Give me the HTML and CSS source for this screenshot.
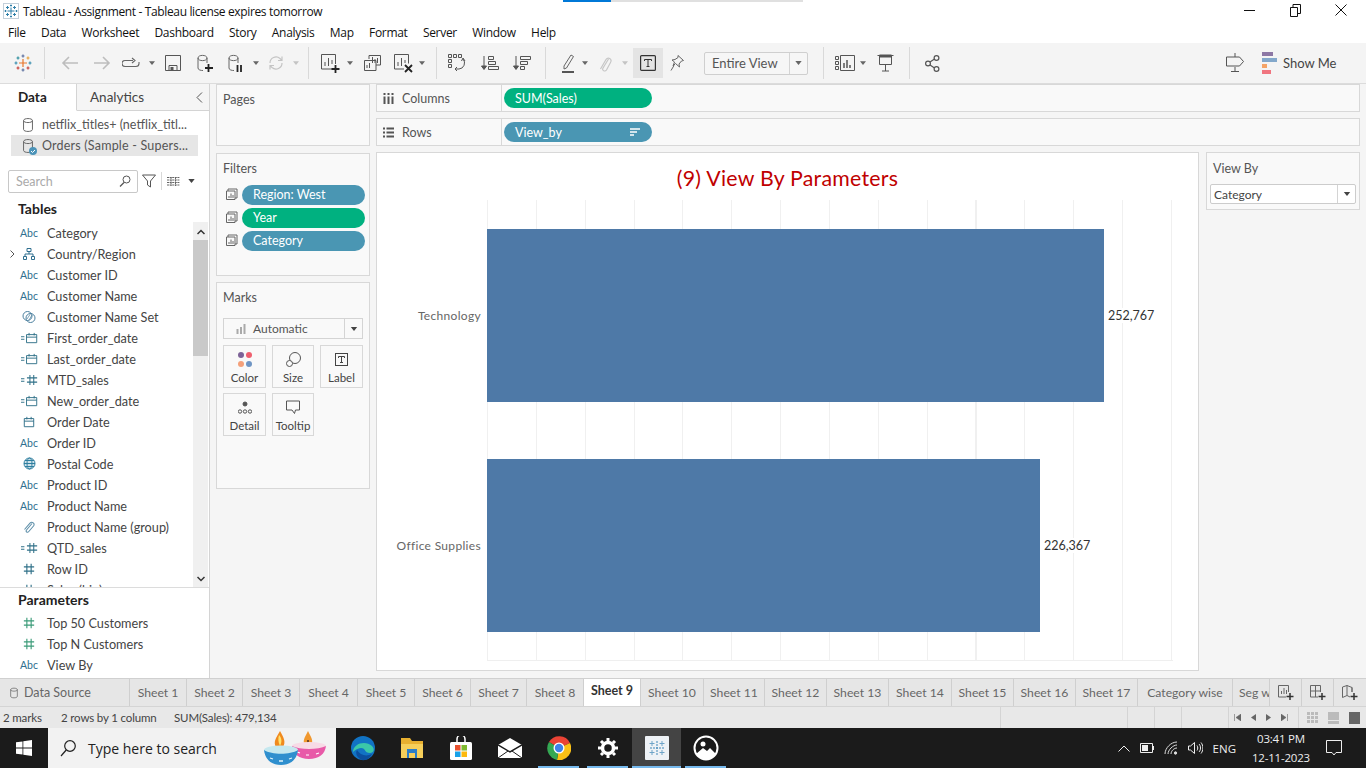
FILE: index.html
```html
<!DOCTYPE html>
<html lang="en">
<head>
<meta charset="utf-8">
<title>Tableau - Assignment</title>
<link rel="stylesheet" href="styles.css">
</head>
<body>
<svg class="defs" width="0" height="0">
  <defs>
    <symbol id="dd" viewBox="0 0 8 5"><path d="M0 0h8L4 5z"/></symbol>
    <symbol id="hash" viewBox="0 0 14 14"><path d="M4.5 1v12M9.500 1v12M1 4.500h12M1 9.500h12" fill="none" stroke="currentColor" stroke-width="1.300"/></symbol>
    <symbol id="eqhash" viewBox="0 0 20 14"><path d="M0 5.500h4M0 8.500h4M10.500 1v12M15 1v12M7 4.500h12M7 9.500h12" fill="none" stroke="currentColor" stroke-width="1.200"/></symbol>
    <symbol id="cal" viewBox="0 0 14 14"><path d="M1.500 3h11v9.500h-11zM1.500 6h11M4.500 1v3M9.500 1v3" fill="none" stroke="currentColor" stroke-width="1.100"/></symbol>
    <symbol id="eqcal" viewBox="0 0 20 14"><path d="M0 5.500h4M0 8.500h4M6.500 3h12v9.500h-12zM6.500 6h12M9.500 1v3M15.500 1v3" fill="none" stroke="currentColor" stroke-width="1.100"/></symbol>
    <symbol id="db" viewBox="0 0 14 18"><path d="M2 4v10c0 3 10 3 10 0V4M2 4c0-3 10-3 10 0s-10 3-10 0z" fill="none" stroke="currentColor" stroke-width="1.100"/></symbol>
    <symbol id="filt" viewBox="0 0 13 13"><path d="M3 3V1h9v9h-2M1.500 3h8.500v8.500H1.500zM4 10V8M6 10V5.500M8 10V7" fill="none" stroke="currentColor"/></symbol>
    <symbol id="flake" viewBox="0 0 18 18"><g fill="none" stroke-width="1.200"><path d="M9 5v8M5 9h8" stroke="#e8762c"/><path d="M9 .5v3M7.500 2h3M9 14.500v3M7.500 16h3" stroke="#5b6f9e"/><path d="M2 7.500v3M.5 9h3M16 7.500v3M14.500 9h3" stroke="#3b8fb0"/><path d="M4 2.500v3M2.500 4h3" stroke="#2f8f9e"/><path d="M14 2.500v3M12.500 4h3" stroke="#e8a23c"/><path d="M4 12.500v3M2.500 14h3M14 12.500v3M12.500 14h3" stroke="#c8423b"/></g></symbol>
  </defs>
</svg>
<div class="loadbar"><span class="load-a"></span><span class="load-b"></span></div>

<header class="titlebar">
  <svg class="app-ico" viewBox="0 0 16 16" width="16" height="16"><rect x=".5" y=".5" width="15" height="15" fill="#fff" stroke="#c4d0da"/><g fill="none" stroke="#2f7fa8"><path d="M8 4.500v7M4.500 8h7M8 1.500v2M7 2.500h2M8 12.500v2M7 13.500h2M2.500 7v2M1.500 8h2M13.500 7v2M12.500 8h2M4.500 3v3M3 4.500h3M11.500 3v3M10 4.500h3M4.500 10v3M3 11.500h3M11.500 10v3M10 11.500h3"/></g></svg>
  <span class="title-text">Tableau - Assignment - Tableau license expires tomorrow</span>
  <div class="win-btns">
    <svg width="11" height="10" viewBox="0 0 11 10"><path d="M0 5.500h11" stroke="#111"/></svg>
    <svg width="11" height="13" viewBox="0 0 11 13"><path d="M.5 3.500h7v9h-7zM3 3.500V.5h7.500v9H7.500" fill="none" stroke="#111"/></svg>
    <svg width="12" height="12" viewBox="0 0 12 12"><path d="M.5.500l11 11M11.500.5l-11 11" stroke="#111"/></svg>
  </div>
</header>

<nav class="menubar">
  <span>File</span><span>Data</span><span>Worksheet</span><span>Dashboard</span><span>Story</span><span>Analysis</span><span>Map</span><span>Format</span><span>Server</span><span>Window</span><span>Help</span>
</nav>

<div class="toolbar">
  <i class="tb w30"><svg width="18" height="18"><use href="#flake"/></svg></i>
  <i class="sp w6"></i><i class="sep"></i><i class="sp w9"></i>
  <i class="tb w32"><svg width="18" height="16" viewBox="0 0 18 16"><path d="M17 8H2M8 2L2 8l6 6" fill="none" stroke="#bdbdbd" stroke-width="1.600"/></svg></i>
  <i class="tb w32"><svg width="18" height="16" viewBox="0 0 18 16"><path d="M1 8h15M10 2l6 6-6 6" fill="none" stroke="#bdbdbd" stroke-width="1.600"/></svg></i>
  <i class="tb w26"><svg width="18" height="12" viewBox="0 0 18 12"><path d="M11 3.500H3a3 3 0 0 0 0 6h11a3 3 0 0 0 3-3V5M10 1l3 2.500L10 6" fill="none" stroke="#666" stroke-width="1.100"/></svg></i>
  <i class="sp w3"></i><i class="tb w10"><svg class="dd" width="6" height="4"><use href="#dd"/></svg></i>
  <i class="tb w32"><svg width="16" height="16" viewBox="0 0 16 16"><path d="M.5.500h15v15H.5zM4 15.500v-5h8v5" fill="none" stroke="#555"/><rect x="5.500" y="12" width="3" height="3" fill="#555"/></svg></i>
  <i class="tb w32"><svg width="16" height="19" viewBox="0 0 16 19"><path d="M1 4v10c0 2 3 2.500 5 2.500M1 4c0-3.500 9-3.500 9 0s-9 3.500-9 0zM10 4v5" fill="none" stroke="#666"/><path d="M11.500 10v8M8 14h8" stroke="#222" stroke-width="1.800"/></svg></i>
  <i class="tb w30"><svg width="16" height="19" viewBox="0 0 16 19"><path d="M1 4v10c0 2 3 2.500 5 2.500M1 4c0-3.500 9-3.500 9 0s-9 3.500-9 0zM10 4v5" fill="none" stroke="#666"/><path d="M9.500 11v7M13 11v7" stroke="#222" stroke-width="1.800"/></svg></i>
  <i class="tb w10"><svg class="dd" width="6" height="4"><use href="#dd"/></svg></i>
  <i class="tb w30"><svg width="16" height="16" viewBox="0 0 16 16"><path d="M2 8a6 6 0 0 1 10-4.500l2 2M14 8a6 6 0 0 1-10 4.500l-2-2M14 1.500v4h-4M2 14.500v-4h4" fill="none" stroke="#c4c4c4" stroke-width="1.200"/></svg></i>
  <i class="tb w10"><svg class="dd off" width="6" height="4"><use href="#dd"/></svg></i>
  <i class="sp w7"></i><i class="sep"></i><i class="sp w7"></i>
  <i class="tb w28"><svg width="19" height="19" viewBox="0 0 19 19"><path d="M11 15H.5V.5h14V10M4 12V8M7.500 12V4M11 10V6" fill="none" stroke="#555"/><path d="M14.500 11v8M10.500 15h8" stroke="#222" stroke-width="1.800"/></svg></i>
  <i class="sp w1"></i><i class="tb w10"><svg class="dd" width="6" height="4"><use href="#dd"/></svg></i>
  <i class="tb w34"><svg width="17" height="16" viewBox="0 0 17 16"><path d="M5 4V.5h11.500V10H12M.5 5.500H12v10H.5zM8.500 8V2M11 8V4M13.500 8V3M3 13v-3M5.500 13v-5" fill="none" stroke="#555"/></svg></i>
  <i class="tb w28"><svg width="19" height="19" viewBox="0 0 19 19"><path d="M10 15H.5V.5h14v9M4 12V8M7.500 12V4M11 9V6" fill="none" stroke="#555"/><path d="M11 11l7 7M18 11l-7 7" stroke="#222" stroke-width="1.800"/></svg></i>
  <i class="tb w10"><svg class="dd" width="6" height="4"><use href="#dd"/></svg></i>
  <i class="sp w9"></i><i class="sep"></i>
  <i class="tb w40"><svg width="18" height="18" viewBox="0 0 18 18" fill="none" stroke="#555"><path d="M.5.500h3v3h-3zM5.500.500h3v3h-3zM10.500.500h3v3h-3zM.5 5.500h3v3h-3zM.5 10.500h3v3h-3zM15 5a6 6 0 0 1-4 10H7M13.500 7L15 4l2 3M9 13l-2 2 2 2"/></svg></i>
  <i class="tb w26"><svg width="18" height="16" viewBox="0 0 18 16" fill="none" stroke="#555"><path d="M8 1.500h5v3H8zM8 6.500h7v3H8zM8 11.500h10v3H8z" transform="translate(-.5 0)"/><path d="M3 1v13" /><path d="M.5 11L3 14.500 5.500 11z" fill="#555"/></svg></i>
  <i class="tb w38"><svg width="18" height="16" viewBox="0 0 18 16" fill="none" stroke="#555"><path d="M7.500 1.500h10v3h-10zM7.500 6.500h7v3h-7zM7.500 11.500h4v3h-4z"/><path d="M3 1v13"/><path d="M.5 11L3 14.500 5.500 11z" fill="#555"/></svg></i>
  <i class="sp w4"></i><i class="sep"></i><i class="sp w10"></i>
  <i class="tb w24"><svg width="13" height="19" viewBox="0 0 13 19"><path d="M2 12L9 1l2.500 1.500L4.500 14 2 15z" fill="none" stroke="#666"/><rect y="17" width="12" height="2" fill="#555"/></svg></i>
  <i class="tb w10"><svg class="dd" width="6" height="4"><use href="#dd"/></svg></i>
  <i class="tb w30"><svg width="13" height="19" viewBox="0 0 13 19"><path d="M10 5L4.500 14c-1.500 2.500 2 4 3.500 2l4-7.500c2-3.500-2.500-6-4.500-3L2 15" fill="none" stroke="#c6c6c6" stroke-width="1.200" transform="translate(-.5 0)"/></svg></i>
  <i class="tb w10"><svg class="dd off" width="6" height="4"><use href="#dd"/></svg></i>
  <i class="sp w3"></i>
  <i class="tb w30 tb-on"><svg width="16" height="16" viewBox="0 0 16 16"><rect x=".6" y=".6" width="14.800" height="14.800" rx="1" fill="none" stroke="#333" stroke-width="1.200"/><path d="M4.500 6V4.500h7V6M8 4.500v7M6.500 11.500h3" fill="none" stroke="#333"/></svg></i>
  <i class="tb w28"><svg width="14" height="16" viewBox="0 0 14 16"><path d="M8 .5l5.500 5-2 .5-2.500 3 .5 3L5.500 8.500 3 11l1.500-4L2 5l3-.5 3-2z" fill="none" stroke="#666"/><path d="M4 10.500L1 15.500" stroke="#666"/></svg></i>
  <i class="sp w13"></i>
  <span class="fit"><span class="fit-text">Entire View</span><span class="fit-dd"><svg class="dd" width="7" height="4"><use href="#dd"/></svg></span></span>
  <i class="sp w15"></i><i class="sep"></i><i class="sp w6"></i>
  <i class="tb w30"><svg width="20" height="16" viewBox="0 0 20 16" fill="none" stroke="#555"><path d="M.5 1.500h3v3h-3zM.5 6.500h3v3h-3zM.5 11.500h3v3h-3zM5.500.5h14v15h-14z"/><path d="M9 13V8M12 13V5M15 13v-3" stroke-width="1.500"/></svg></i>
  <i class="tb w6"><svg class="dd" width="6" height="4"><use href="#dd"/></svg></i>
  <i class="tb w38"><svg width="17" height="18" viewBox="0 0 17 18" fill="none" stroke="#555"><path d="M.5 1.500h16M2.500 1.500v9h12v-9M8.500 10.500V17M5 17h7"/><path d="M2.500 1h12v2h-12z" fill="#555"/></svg></i>
  <i class="sp w5"></i><i class="sep"></i>
  <i class="tb w44"><svg width="15" height="17" viewBox="0 0 15 17" fill="none" stroke="#555" stroke-width="1.200"><circle cx="3" cy="8.500" r="2.400"/><circle cx="11.500" cy="3" r="2.400"/><circle cx="11.500" cy="14" r="2.400"/><path d="M5 7l4.500-3M5 10l4.500 3"/></svg></i>
  <i class="grow"></i>
  <i class="tb w18"><svg width="18" height="20" viewBox="0 0 18 20" fill="none" stroke="#555"><path d="M9 0v5M9 15v5M5 19.500h8M.5 5h13l4 4.500-4 4.500H.5z" transform="translate(0 -1)"/></svg></i>
  <i class="sp w18"></i>
  <span class="showme">
    <svg width="16" height="23" viewBox="0 0 16 23"><rect width="11" height="4" fill="#8d78a5"/><rect y="6" width="15" height="4" fill="#83a8cb"/><rect y="12" width="5" height="4" fill="#f4a468"/><rect y="18" width="9" height="4" fill="#f0757f"/></svg>
    <span>Show Me</span>
  </span>
</div>

<main class="work">
  <aside class="left">
    <div class="side-tabs">
      <span class="side-tab on">Data</span>
      <span class="side-tab">Analytics</span>
      <svg class="collapse" width="7" height="11" viewBox="0 0 7 11"><path d="M6 .5l-5 5 5 5" fill="none" stroke="#555"/></svg>
    </div>
    <div class="sources">
      <div class="source"><svg width="14" height="16" class="c-grey"><use href="#db"/></svg><span>netflix_titles+ (netflix_titl...</span></div>
      <div class="source sel"><span class="src-ico"><svg width="14" height="16" class="c-grey"><use href="#db"/></svg><svg class="check" width="8" height="8" viewBox="0 0 8 8"><circle cx="4" cy="4" r="4" fill="#4b93b8"/><path d="M2 4l1.500 1.500L6 3" fill="none" stroke="#fff"/></svg></span><span class="sel-name">Orders (Sample - Supers...</span></div>
    </div>
    <div class="searchrow">
      <div class="search"><span>Search</span><svg width="12" height="12" viewBox="0 0 12 12"><circle cx="7.500" cy="4.500" r="3.500" fill="none" stroke="#555"/><path d="M5 7.500l-4 4" stroke="#555" stroke-width="1.300"/></svg></div>
      <svg width="14" height="14" viewBox="0 0 14 14"><path d="M.5 1h13L8.500 7v6l-3-2V7z" fill="none" stroke="#555"/></svg>
      <i class="vsep"></i>
      <svg width="13" height="9" viewBox="0 0 13 9"><path d="M0 .5h13M0 3h13M0 5.500h13M0 8h13M4 0v9M8.500 0v9" stroke="#666" stroke-dasharray="2 .6"/></svg>
      <svg class="dd dark" width="7" height="4"><use href="#dd"/></svg>
    </div>
    <h2 class="head">Tables</h2>
    <div class="fields">
      <div class="field-list">
        <div class="field"><span class="fi abc">Abc</span>Category</div>
        <div class="field"><svg class="expand" width="5" height="8" viewBox="0 0 5 8"><path d="M.5.500L4 4 .5 7.500" fill="none" stroke="#555"/></svg><span class="fi"><svg width="12" height="12" viewBox="0 0 12 12" fill="none" stroke="#2f6f8f"><path d="M4 .5h4v3H4zM.5 8.500h3v3h-3zM8.500 8.500h3v3h-3zM6 3.500V6M2 8.500V6h8v2.500"/></svg></span>Country/Region</div>
        <div class="field"><span class="fi abc">Abc</span>Customer ID</div>
        <div class="field"><span class="fi abc">Abc</span>Customer Name</div>
        <div class="field"><span class="fi"><svg width="14" height="14" viewBox="0 0 14 14" fill="none" stroke="#4a7f9e"><circle cx="5.500" cy="6" r="4.500"/><circle cx="8.500" cy="8" r="4.500"/><path d="M5 9l4-6M7 10l3-5" stroke-width=".7"/></svg></span>Customer Name Set</div>
        <div class="field"><span class="fi"><svg width="17" height="12" class="c-teal" viewBox="0 0 20 14"><use href="#eqcal"/></svg></span>First_order_date</div>
        <div class="field"><span class="fi"><svg width="17" height="12" class="c-teal" viewBox="0 0 20 14"><use href="#eqcal"/></svg></span>Last_order_date</div>
        <div class="field"><span class="fi"><svg width="17" height="12" class="c-teal" viewBox="0 0 20 14"><use href="#eqhash"/></svg></span>MTD_sales</div>
        <div class="field"><span class="fi"><svg width="17" height="12" class="c-teal" viewBox="0 0 20 14"><use href="#eqcal"/></svg></span>New_order_date</div>
        <div class="field"><span class="fi"><svg width="12" height="12" class="c-teal" viewBox="0 0 14 14"><use href="#cal"/></svg></span>Order Date</div>
        <div class="field"><span class="fi abc">Abc</span>Order ID</div>
        <div class="field"><span class="fi"><svg width="13" height="13" viewBox="0 0 13 13" fill="none" stroke="#2f7fa0"><circle cx="6.500" cy="6.500" r="5.500" fill="#cfe2ea"/><ellipse cx="6.500" cy="6.500" rx="2.500" ry="5.500"/><path d="M1 6.500h11M2 3.500h9M2 9.500h9"/></svg></span>Postal Code</div>
        <div class="field"><span class="fi abc">Abc</span>Product ID</div>
        <div class="field"><span class="fi abc">Abc</span>Product Name</div>
        <div class="field"><span class="fi"><svg width="12" height="14" viewBox="0 0 12 14"><path d="M9 3.500L3.500 10c-1.300 1.700 1 3 2.300 1.500L10.500 6c2-2.500-1.500-5-3.500-2.800L1.500 9.500" fill="none" stroke="#5f90aa" stroke-width="1.100"/></svg></span>Product Name (group)</div>
        <div class="field"><span class="fi"><svg width="17" height="12" class="c-teal" viewBox="0 0 20 14"><use href="#eqhash"/></svg></span>QTD_sales</div>
        <div class="field"><span class="fi"><svg width="12" height="12" class="c-teal" viewBox="0 0 14 14"><use href="#hash"/></svg></span>Row ID</div>
        <div class="field"><span class="fi"><svg width="12" height="12" class="c-teal" viewBox="0 0 14 14"><use href="#hash"/></svg></span>Sales (bin)</div>
      </div>
      <div class="scroll">
        <svg class="sc-arrow" width="8" height="6" viewBox="0 0 8 6"><path d="M.5 5L4 1.500 7.500 5" fill="none" stroke="#333" stroke-width="1.500"/></svg>
        <div class="thumb"></div>
        <svg class="sc-arrow end" width="8" height="6" viewBox="0 0 8 6"><path d="M.5 1L4 4.500 7.500 1" fill="none" stroke="#333" stroke-width="1.500"/></svg>
      </div>
    </div>
    <h2 class="head params">Parameters</h2>
    <div class="field"><span class="fi"><svg width="12" height="12" class="c-green" viewBox="0 0 14 14"><use href="#hash"/></svg></span>Top 50 Customers</div>
    <div class="field"><span class="fi"><svg width="12" height="12" class="c-green" viewBox="0 0 14 14"><use href="#hash"/></svg></span>Top N Customers</div>
    <div class="field"><span class="fi abc">Abc</span>View By</div>
  </aside>

  <section class="cards">
    <div class="card pages"><h3>Pages</h3></div>
    <div class="card filters">
      <h3>Filters</h3>
      <div class="filter"><svg width="13" height="13" class="c-grey"><use href="#filt"/></svg><span class="pill blue">Region: West</span></div>
      <div class="filter"><svg width="13" height="13" class="c-grey"><use href="#filt"/></svg><span class="pill green">Year</span></div>
      <div class="filter"><svg width="13" height="13" class="c-grey"><use href="#filt"/></svg><span class="pill blue">Category</span></div>
    </div>
    <div class="card marks">
      <h3>Marks</h3>
      <div class="marktype">
        <svg width="10" height="10" viewBox="0 0 10 10"><path d="M1.500 10V5M5 10V3M8.500 10V0" stroke="#aaa" stroke-width="2"/></svg>
        <span>Automatic</span>
        <span class="mt-dd"><svg class="dd dark" width="8" height="4"><use href="#dd"/></svg></span>
      </div>
      <div class="markgrid">
        <div class="mk"><svg width="14" height="15" viewBox="0 0 14 15"><circle cx="3" cy="3" r="3" fill="#7d6398"/><circle cx="11" cy="3" r="3" fill="#ef5f6e"/><circle cx="3" cy="12" r="3" fill="#f4a07a"/><circle cx="11" cy="12" r="3" fill="#6f95c4"/></svg><span>Color</span></div>
        <div class="mk"><svg width="15" height="15" viewBox="0 0 15 15" fill="none" stroke="#555"><circle cx="9" cy="6" r="5.500"/><circle cx="3.500" cy="11.500" r="3" fill="#fafafa"/></svg><span>Size</span></div>
        <div class="mk"><svg width="13" height="13" viewBox="0 0 13 13" fill="none" stroke="#444"><rect x=".5" y=".5" width="12" height="12"/><path d="M3.500 5V3.500h6V5M6.500 3.500v6M5 9.500h3"/></svg><span>Label</span></div>
        <div class="mk"><svg width="14" height="13" viewBox="0 0 14 13" fill="none" stroke="#555"><circle cx="7" cy="3" r="2" fill="#555"/><circle cx="2" cy="10.500" r="1.700"/><circle cx="7" cy="10.500" r="1.700"/><circle cx="12" cy="10.500" r="1.700"/></svg><span>Detail</span></div>
        <div class="mk"><svg width="14" height="14" viewBox="0 0 14 14"><path d="M.5.500h13v9h-4l-1 3.500-2.500-3.500H.5z" fill="none" stroke="#555"/></svg><span>Tooltip</span></div>
      </div>
    </div>
  </section>

  <section class="view">
    <div class="shelf"><span class="shelf-l"><svg width="11" height="11" viewBox="0 0 11 11"><path d="M1.500 0v2M5.500 0v2M9.500 0v2M1.500 3.500V11M5.500 3.500V11M9.500 3.500V11" stroke="#555" stroke-width="2"/></svg>Columns</span><span class="pill green shelf-pill">SUM(Sales)</span></div>
    <div class="shelf"><span class="shelf-l"><svg width="11" height="11" viewBox="0 0 11 11"><path d="M0 1.500h2M3.500 1.500H11M0 5.500h2M3.500 5.500H11M0 9.500h2M3.500 9.500H11" stroke="#555" stroke-width="2"/></svg>Rows</span><span class="pill blue shelf-pill sorted">View_by<svg width="10" height="8" viewBox="0 0 10 8"><path d="M0 1h10M0 4h7M0 7h4" stroke="#fff" stroke-width="1.500"/></svg></span></div>
    <div class="lower">
      <div class="chart">
        <h1 class="chart-title">(9) View By Parameters</h1>
        <div class="plot">
          <div class="bar-row"><span class="cat">Technology</span><div class="bar tech"></div><span class="val">252,767</span></div>
          <div class="bar-row"><span class="cat">Office Supplies</span><div class="bar office"></div><span class="val">226,367</span></div>
        </div>
      </div>
      <div class="card param">
        <h3>View By</h3>
        <div class="select"><span>Category</span><span class="sel-dd"><svg class="dd dark" width="8" height="4"><use href="#dd"/></svg></span></div>
      </div>
    </div>
  </section>
</main>

<div class="tabs">
  <span class="tab src"><svg width="10" height="12" class="c-grey" viewBox="0 0 14 18"><use href="#db"/></svg>Data Source</span>
  <span class="tab t57">Sheet 1</span><span class="tab t56">Sheet 2</span><span class="tab t57">Sheet 3</span><span class="tab t58">Sheet 4</span><span class="tab t57">Sheet 5</span><span class="tab t56">Sheet 6</span><span class="tab t56">Sheet 7</span><span class="tab t57">Sheet 8</span>
  <span class="tab t57 active">Sheet 9</span>
  <span class="tab t63">Sheet 10</span><span class="tab t61">Sheet 11</span><span class="tab t62">Sheet 12</span><span class="tab t62">Sheet 13</span><span class="tab t63">Sheet 14</span><span class="tab t62">Sheet 15</span><span class="tab t62">Sheet 16</span><span class="tab t62">Sheet 17</span>
  <span class="tab t95">Category wise</span><span class="tab t36">Seg wise</span>
  <span class="tab-add"><svg width="16" height="15" viewBox="0 0 16 15" fill="none" stroke="#666"><path d="M8 12H.5V.5h10V7M3.500 9V6M6 9V3M8.500 9V5"/><path d="M12 8v7M8.500 11.500h7" stroke="#333" stroke-width="1.500"/></svg></span>
  <span class="tab-add"><svg width="16" height="15" viewBox="0 0 16 15" fill="none" stroke="#666"><path d="M8 12H.5V.5h10V7M.5 6h10M5.500.5V12"/><path d="M12 8v7M8.500 11.500h7" stroke="#333" stroke-width="1.500"/></svg></span>
  <span class="tab-add"><svg width="16" height="15" viewBox="0 0 16 15" fill="none" stroke="#666"><path d="M8 12L5 10.500l-4.500 2V2L5 .5l5 2V7M5 .5v10M10 2.500V7"/><path d="M12 8v7M8.500 11.500h7" stroke="#333" stroke-width="1.500"/></svg></span>
</div>

<div class="status">
  <span class="st-a">2 marks</span><span class="st-b">2 rows by 1 column</span><span class="st-c">SUM(Sales): 479,134</span>
  <i class="grow"></i>
  <i class="st-cell c1"></i><i class="st-cell c2"></i><i class="st-cell c3"></i><i class="st-cell c4"></i>
  <span class="st-nav">
    <svg width="7" height="7" viewBox="0 0 7 7"><path d="M.5 0v7M7 0v7L2 3.500z" fill="#666" stroke="#666" stroke-width=".6"/></svg>
    <svg width="5" height="7" viewBox="0 0 5 7"><path d="M5 0v7L0 3.500z" fill="#666"/></svg>
    <svg width="5" height="7" viewBox="0 0 5 7"><path d="M0 0v7l5-3.500z" fill="#666"/></svg>
    <svg width="7" height="7" viewBox="0 0 7 7"><path d="M6.500 0v7M0 0v7l5-3.500z" fill="#666" stroke="#666" stroke-width=".6"/></svg>
  </span>
  <span class="st-view">
    <i class="vw small"></i><i class="vw mid"></i><i class="vw big"></i>
  </span>
</div>

<footer class="taskbar">
  <span class="start"><svg width="16" height="16" viewBox="0 0 16 16" fill="#fff"><path d="M0 2.300l6.500-.9v6.200H0zM7.300 1.300L16 0v7.600H7.300zM0 8.400h6.500v6.200L0 13.700zM7.300 8.400H16V16l-8.700-1.200z"/></svg></span>
  <div class="tasksearch">
    <svg width="16" height="17" viewBox="0 0 16 17" fill="none" stroke="#222" stroke-width="1.200"><circle cx="10" cy="6" r="5.300"/><path d="M6.200 10L1 16"/></svg>
    <span>Type here to search</span>
    <svg class="diya" width="62" height="40" viewBox="0 0 62 40">
      <path d="M41 17c-3-4 0-8 3-14 3 6 6 10 3 14z" fill="#f0982f"/><rect x="43" y="12" width="2" height="6" fill="#7a4a22"/>
      <ellipse cx="45" cy="18" rx="17" ry="4" fill="#f7dbe6"/><path d="M28 18c1 8 7 13 17 13s16-5 17-13c-8 4-26 4-34 0z" fill="#e85aa8"/><path d="M33 24l3 1M42 27h3M52 26l3-1" stroke="#fff" stroke-width="1.200"/>
      <path d="M12 19c-3-5 0-9 4-16 4 7 6 11 3 16z" fill="#f08a1e"/><path d="M15 7c-1 3-1 7 1 11 2-4 2-8-1-11z" fill="#ffe36e"/>
      <ellipse cx="17" cy="22" rx="17" ry="4.500" fill="#c5e8ef"/><path d="M0 22c1 9 7 15 17 15s16-6 17-15c-8 5-26 5-34 0z" fill="#2f8fce"/><path d="M6 30l3 1M15 33h4M25 31l3-1" stroke="#dff3fa" stroke-width="1.300"/>
    </svg>
  </div>
  <span class="tk first"><svg width="26" height="26" viewBox="0 0 26 26"><circle cx="13" cy="13" r="12" fill="#1173c4"/><path d="M3 17C3 8 16 5 22 11c3 3 2 7-2 7-6 0-4-5-9-5-4 0-8 4-8 4z" fill="#3bc7a8"/><path d="M12 25c-5-2-7-7-5-10 3 5 9 7 15 4-2 4-6 7-10 6z" fill="#0b4f9e"/></svg></span>
  <span class="tk"><svg width="24" height="22" viewBox="0 0 24 22"><path d="M1 1h9l2 3h11v5H1z" fill="#e8b030"/><path d="M1 7h22v14H1z" fill="#f6cf5a"/><path d="M7 12h10v9h-2v-5H9v5H7z" fill="#2b7dc7"/></svg></span>
  <span class="tk"><svg width="22" height="24" viewBox="0 0 22 24"><path d="M7 6V3a4 4 0 0 1 8 0v3" fill="none" stroke="#fff" stroke-width="1.500"/><rect y="6" width="22" height="18" rx="1.500" fill="#fff"/><rect x="5" y="9" width="5.500" height="5.500" fill="#e8502e"/><rect x="11.500" y="9" width="5.500" height="5.500" fill="#7fba30"/><rect x="5" y="15.500" width="5.500" height="5.500" fill="#19a1e8"/><rect x="11.500" y="15.500" width="5.500" height="5.500" fill="#fcb90f"/></svg></span>
  <span class="tk"><svg width="24" height="20" viewBox="0 0 24 20"><path d="M0 7L12 0l12 7v13H0z" fill="#fff"/><path d="M0 7l12 7 12-7" fill="none" stroke="#1a1a1a" stroke-width="1.500"/><path d="M0 20l10-7M24 20l-10-7" stroke="#1a1a1a"/></svg></span>
  <span class="tk run"><svg width="24" height="24" viewBox="0 0 24 24"><path d="M12 12L2 6a12 12 0 0 1 21 1z" fill="#ea4335"/><path d="M12 12l11-5a12 12 0 0 1-13 17z" fill="#fbc116"/><path d="M12 12L10 24A12 12 0 0 1 2 6z" fill="#34a853"/><circle cx="12" cy="12" r="5.500" fill="#fff"/><circle cx="12" cy="12" r="4.200" fill="#3f83ea"/></svg></span>
  <span class="tk run"><svg width="20" height="20" viewBox="0 0 20 20"><circle cx="10" cy="10" r="5.500" fill="none" stroke="#fff" stroke-width="3.500"/><path d="M10 0v20M0 10h20M3 3l14 14M17 3L3 17" stroke="#fff" stroke-width="3" stroke-dasharray="3 14"/></svg></span>
  <span class="tk run act"><svg width="24" height="24" viewBox="0 0 24 24"><rect width="24" height="24" rx="1" fill="#eef2f6"/><g stroke="#6ea4c8" fill="none"><path d="M12 5v14M5 12h14" stroke="#3f87b8" stroke-dasharray="2 1"/><path d="M7 5v5M4.500 7.500h5M17 5v5M14.500 7.500h5M7 14v5M4.500 16.500h5M17 14v5M14.500 16.500h5"/></g></svg></span>
  <span class="tk run"><svg width="26" height="26" viewBox="0 0 26 26"><circle cx="13" cy="13" r="11.500" fill="#1a1a1a" stroke="#fff" stroke-width="2"/><circle cx="10" cy="9" r="2.500" fill="#fff"/><path d="M3 19l7-6 4 3 3-3 6 6a12 12 0 0 1-20 0z" fill="#fff"/></svg></span>
  <i class="grow"></i>
  <span class="tray">
    <svg width="12" height="7" viewBox="0 0 12 7"><path d="M.5 6.500L6 1l5.500 5.500" fill="none" stroke="#eee"/></svg>
    <svg width="14" height="10" viewBox="0 0 14 10"><path d="M.5.500h12v9H.5z" fill="none" stroke="#eee"/><rect x="2" y="2" width="6" height="6" fill="#eee"/><rect x="13" y="3" width="1" height="4" fill="#eee"/></svg>
    <svg width="14" height="14" viewBox="0 0 14 14" fill="none" stroke="#ddd"><path d="M1 13C1 7 7 1 13 1M4 13c0-4 5-9 9-9M7 13c0-3 3-6 6-6"/><circle cx="11.500" cy="12" r="1.200" fill="#ddd"/></svg>
    <svg width="15" height="14" viewBox="0 0 15 14" fill="none" stroke="#eee"><path d="M.5 5v4h2l4 3.500v-11l-4 3.500zM9 4.500c1 1.500 1 3.500 0 5M11 3c2 2 2 6 0 8M13 1.500c2.500 3 2.500 8 0 11"/></svg>
    <span class="lang">ENG</span>
  </span>
  <span class="clock"><span>03:41 PM</span><span>12-11-2023</span></span>
  <span class="notif"><svg width="16" height="16" viewBox="0 0 16 16"><path d="M.5.500h15v12H10l-2 2.500-2-2.500H.5z" fill="none" stroke="#eee"/></svg></span>
</footer>
</body>
</html>
```

FILE: styles.css
```css
* { box-sizing: border-box; margin: 0; padding: 0; }
html, body { width: 1366px; height: 768px; overflow: hidden; }
body { position: relative; background: #f5f5f5; font-family: "Lato", "Liberation Sans", sans-serif; font-size: 13px; color: #444; }
i { font-style: normal; display: block; }
.defs { position: absolute; }
.loadbar { position: absolute; top: 0; left: 563px; display: flex; height: 2px; }
.load-a { width: 48px; background: #0078d7; }
.load-b { width: 192px; background: #e0e0e0; }

.titlebar { height: 22px; background: #fff; display: flex; align-items: center; padding-left: 3px; }
.app-ico { margin-right: 4px; }
.title-text { font: 12px "Open Sans", sans-serif; color: #111; letter-spacing: -.36px; }
.win-btns { margin-left: auto; display: flex; align-items: center; gap: 34.500px; padding-right: 19px; margin-top: -2px; }

.menubar { height: 21px; background: #fff; display: flex; align-items: center; gap: 15.300px; padding-left: 8px; font: 12px "Open Sans", sans-serif; color: #111; letter-spacing: -.3px; }

.toolbar { height: 41px; background: #f4f4f4; border-bottom: 1px solid #dcdcdc; display: flex; align-items: center; padding-left: 8px; }
.tb { height: 30px; display: flex; align-items: center; justify-content: center; flex: none; }
.tb-on { background: #e4e4e4; }
.sp { flex: none; height: 1px; }
.sep { flex: none; width: 1px; height: 32px; background: #d9d9d9; }
.grow { flex: 1; }
.w1 { width: 1px; } .w3 { width: 3px; } .w4 { width: 4px; } .w5 { width: 5px; } .w6 { width: 6px; } .w7 { width: 7px; } .w9 { width: 9px; } .w10 { width: 10px; } .w13 { width: 13px; } .w15 { width: 15px; } .w18 { width: 18px; } .w24 { width: 24px; } .w26 { width: 26px; } .w28 { width: 28px; } .w30 { width: 30px; } .w32 { width: 32px; } .w34 { width: 34px; } .w38 { width: 38px; } .w40 { width: 40px; } .w44 { width: 44px; }
.dd { fill: #666; flex: none; }
.dd.off { fill: #c4c4c4; }
.dd.dark { fill: #444; }
.fit { flex: none; width: 104px; height: 23px; border: 1px solid #cfcfcf; border-radius: 2px; display: flex; align-items: center; color: #555; font-size: 13px; background: #f6f6f6; }
.fit-text { flex: 1; padding-left: 7px; }
.fit-dd { width: 18px; height: 100%; border-left: 1px solid #d4d4d4; display: flex; align-items: center; justify-content: center; }
.showme { flex: none; width: 104px; display: flex; align-items: center; gap: 5px; font-size: 13px; color: #444; }

.work { height: 594px; display: flex; background: #f5f5f5; }
.left { flex: none; width: 210px; background: #fff; border-right: 1px solid #d4d4d4; display: flex; flex-direction: column; }
.side-tabs { height: 27px; flex: none; display: flex; align-items: center; position: relative; background: #f5f5f5; border-bottom: 1px solid #d4d4d4; }
.side-tab { height: 27px; display: flex; align-items: center; font-size: 13.500px; color: #444; }
.side-tab.on { width: 77px; padding-left: 18px; background: #fff; color: #222; font-weight: 700; border-right: 1px solid #d4d4d4; border-bottom: 1px solid #fff; }
.side-tab:not(.on) { padding-left: 13px; }
.collapse { position: absolute; right: 6px; top: 8px; }
.sources { flex: none; padding: 3px 11px 0; height: 59px; }
.source { height: 21px; padding: 0 0 0 10px; width: 187px; display: flex; align-items: center; gap: 7px; color: #555; font-size: 12.500px; white-space: nowrap; overflow: hidden; }
.source.sel { background: #e6e6e6; }
.sel-name { letter-spacing: .2px; }
.source svg { flex: none; }
.src-ico { position: relative; display: flex; flex: none; }
.check { position: absolute; right: -2px; bottom: -1px; }
.c-grey { color: #666; } .c-teal { color: #2f7088; } .c-green { color: #3b9b78; }
.searchrow { flex: none; height: 24px; margin-top: -1px; display: flex; align-items: center; padding-left: 8px; }
.search { width: 130px; height: 23px; border: 1px solid #c8c8c8; border-radius: 2px; display: flex; align-items: center; justify-content: space-between; padding: 0 6px 0 7px; color: #aaa; font-size: 12.500px; margin-right: 4px; }
.vsep { width: 1px; height: 18px; background: #d8d8d8; margin: 0 5px; }
.searchrow .dd { margin-left: 8px; }
.head { flex: none; font-size: 14px; font-weight: 700; color: #222; padding-left: 18px; height: 30px; display: flex; align-items: center; }
.fields { flex: none; height: 366px; display: flex; overflow: hidden; border-bottom: 1px solid #dcdcdc; margin-top: -1px; }
.field-list { flex: 1; overflow: hidden; }
.field { height: 21px; flex: none; display: flex; align-items: center; position: relative; padding-left: 47px; font-size: 12.700px; color: #444; white-space: nowrap; }
.fi { position: absolute; left: 18px; width: 22px; display: flex; justify-content: center; align-items: center; }
.abc { color: #2f6f8f; font-size: 10.500px; font-weight: 400; }
.expand { position: absolute; left: 10px; top: 7px; }
.scroll { flex: none; width: 15px; margin-right: 1px; background: #f0f0f0; display: flex; flex-direction: column; align-items: center; padding-top: 7px; }
.sc-arrow { flex: none; }
.sc-arrow.end { margin-top: auto; margin-bottom: 5px; }
.thumb { width: 15px; height: 116px; background: #c9c9c9; margin-top: 5px; }
.head.params { height: 24px; margin-top: -1px; margin-bottom: 1px; }

.cards { flex: none; width: 166px; padding-left: 6px; padding-right: 6px; display: flex; flex-direction: column; gap: 6px; }
.card { background: #f9f9f9; border: 1px solid #d8d8d8; }
.card h3 { font-weight: 400; font-size: 12.500px; color: #555; padding: 7px 0 0 6px; height: 28px; }
.pages { height: 62px; }
.filters { height: 123px; margin-top: 1px; }
.filter { height: 23px; display: flex; align-items: center; gap: 4px; padding-left: 8px; }
.filter:first-of-type { margin-top: 1px; }
.filter .pill { flex: 1; margin-right: 4px; }
.pill { height: 20px; border-radius: 10px; color: #fff; font-size: 12.500px; display: flex; align-items: center; padding-left: 11px; }
.pill.blue { background: #4a96b3; }
.pill.green { background: #00b180; }
.marks { height: 207px; }
.marktype { margin: 7px 6px 6px; height: 21px; border: 1px solid #d4d4d4; display: flex; align-items: center; padding-left: 12px; gap: 7px; font-size: 12px; color: #555; }
.mt-dd { margin-left: auto; width: 18px; height: 100%; border-left: 1px solid #d4d4d4; display: flex; align-items: center; justify-content: center; }
.markgrid { display: grid; grid-template-columns: 43px 42px 43px; column-gap: 6px; row-gap: 5px; padding-left: 6px; }
.mk { height: 43px; border: 1px solid #d8d8d8; display: flex; flex-direction: column; align-items: center; padding-top: 6px; gap: 4px; font-size: 11.500px; color: #444; white-space: nowrap; }
.mk svg { flex: none; height: 15px; }

.view { flex: 1; min-width: 0; padding-right: 6px; display: flex; flex-direction: column; }
.shelf { flex: none; height: 28px; margin-bottom: 6px; background: #f9f9f9; border: 1px solid #d8d8d8; display: flex; align-items: center; }
.shelf-l { width: 125px; height: 100%; border-right: 1px solid #d8d8d8; display: flex; align-items: center; gap: 8px; padding-left: 6px; color: #555; font-size: 12.500px; flex: none; }
.shelf-pill { width: 148px; margin-left: 2px; }
.sorted { justify-content: space-between; padding-right: 12px; }
.lower { flex: 1; min-height: 0; display: flex; gap: 7px; align-items: flex-start; }
.chart { flex: none; width: 823px; height: 519px; background: #fff; border: 1px solid #d8d8d8; padding-top: 13px; }
.chart-title { font: 400 21.300px/24px "Lato", sans-serif; color: #c00000; text-align: center; height: 34px; letter-spacing: .25px; }
.plot { margin-left: 110px; width: 686px; height: 461px; padding-top: 29px; display: flex; flex-direction: column; gap: 57px; border-bottom: 1px solid #efefef;
  background-image: repeating-linear-gradient(to right, #f0f0f0 0, #f0f0f0 1px, transparent 1px, transparent 48.850px); }
.bar-row { height: 173px; display: flex; align-items: center; position: relative; }
.bar { height: 173px; background: #4e79a7; flex: none; }
.tech { width: 617px; }
.office { width: 553px; }
.val { color: #333; font-size: 12.500px; margin-left: 4px; background: #fff; }
.cat { position: absolute; right: 100%; margin: -1px 6px 0 0; color: #666; font-size: 12px; white-space: nowrap; letter-spacing: .32px; }
.param { flex: none; width: 154px; height: 58px; }
.param h3 { height: 31px; padding-top: 8px; }
.select { margin: 0 3px; height: 20px; background: #fff; border: 1px solid #ccc; border-radius: 2px; display: flex; align-items: center; justify-content: space-between; padding-left: 3px; font-size: 12px; color: #444; }
.sel-dd { width: 18px; height: 100%; border-left: 1px solid #d4d4d4; display: flex; align-items: center; justify-content: center; }

.tabs { height: 29px; background: #e6e6e6; border-top: 1px solid #d0d0d0; border-bottom: 1px solid #d4d4d4; display: flex; overflow: hidden; }
.tab { flex: none; height: 100%; display: flex; align-items: center; justify-content: center; border-right: 1px solid #cfcfcf; color: #666; font-size: 12.200px; white-space: nowrap; overflow: hidden; }
.tab.src { width: 130px; justify-content: flex-start; padding-left: 9px; gap: 5px; font-size: 12.500px; }
.t56 { width: 56px; } .t57 { width: 57px; } .t58 { width: 58px; } .t61 { width: 61px; } .t62 { width: 62px; } .t63 { width: 63px; } .t95 { width: 95px; }
.t36 { width: 36px; justify-content: flex-start; padding-left: 6px; border-right: 0; }
.tab.active { background: #fff; color: #333; font-weight: 700; font-size: 12.500px; align-items: flex-start; padding-top: 4px; height: 29px; }
.tab-add { flex: none; width: 32px; height: 100%; display: flex; align-items: center; justify-content: center; border-left: 1px solid #cfcfcf; }

.status { height: 21px; background: #e8e8e8; display: flex; align-items: center; color: #444; font-size: 11.500px; letter-spacing: -.15px; padding-left: 3px; }
.st-a { width: 58px; } .st-b { width: 113px; } .st-c { width: 130px; }
.st-cell { flex: none; height: 100%; border-left: 1px solid #d4d4d4; }
.c1 { width: 127px; } .c2 { width: 27px; } .c3 { width: 27px; } .c4 { width: 47px; }
.st-nav { flex: none; width: 71px; height: 100%; border-left: 1px solid #d4d4d4; border-right: 1px solid #d4d4d4; display: flex; align-items: center; gap: 10px; padding-left: 5px; }
.st-view { flex: none; width: 67px; display: flex; align-items: center; gap: 10px; padding-left: 8px; }
.vw { width: 11px; height: 12px; flex: none; }
.vw.small { background-color: #bbb; background-image: linear-gradient(90deg, #e8e8e8 1px, transparent 1px), linear-gradient(#e8e8e8 1px, transparent 1px); background-size: 4px 4px; background-position: -1px -1px; }
.vw.mid { background: linear-gradient(#bbb 0 8px, #e8e8e8 8px 9px, #bbb 9px); }
.vw.big { background: #666; }

.taskbar { height: 40px; background: #1b1b1b; display: flex; align-items: center; color: #eee; }
.start { flex: none; width: 48px; display: flex; justify-content: center; }
.tasksearch { flex: none; width: 288px; height: 100%; background: #f2f2f2; color: #222; display: flex; align-items: center; padding-left: 12px; gap: 12px; font: 14px "Open Sans", sans-serif; position: relative; }
.diya { position: absolute; left: 216px; top: 0; }
.tk { flex: none; width: 49px; height: 100%; display: flex; align-items: center; justify-content: center; position: relative; }
.tk.first { margin-left: 2px; }
.run::after { content: ""; position: absolute; left: 4px; right: 4px; bottom: 0; height: 2px; background: #76b9ed; }
.tk.act::after { left: 0; right: 0; }
.tk.act { background: #444; }
.tray { flex: none; display: flex; align-items: center; gap: 10px; margin-right: 13px; }
.lang { font: 11.500px "Open Sans", sans-serif; }
.clock { flex: none; width: 64px; display: flex; flex-direction: column; align-items: center; font: 11.500px/19px "Open Sans", sans-serif; letter-spacing: -.2px; }
.notif { flex: none; width: 41px; margin-right: 12px; display: flex; justify-content: center; }
```
